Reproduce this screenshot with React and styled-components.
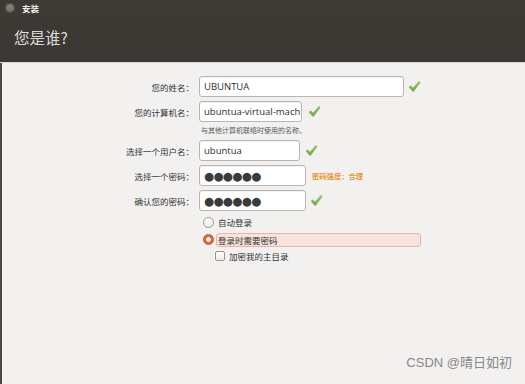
import React from "react";
import styled, { createGlobalStyle } from "styled-components";

const GlobalStyle = createGlobalStyle`
  html, body {
    margin: 0;
    padding: 0;
    width: 525px;
    height: 384px;
    overflow: hidden;
    background: #f2f1f0;
  }
  #root {
    height: 384px;
  }
`;

const Window = styled.div`
  display: flex;
  flex-direction: column;
  width: 525px;
  height: 384px;
  font-family: "Noto Sans CJK SC", "Noto Sans", sans-serif;
  position: relative;
`;

const TitleBar = styled.div`
  display: flex;
  align-items: center;
  gap: 7px;
  height: 16px;
  padding-left: 5px;
  background: #3d3a36;
`;

const CloseButton = styled.div`
  width: 10px;
  height: 10px;
  border-radius: 50%;
  background: radial-gradient(circle at 50% 40%, #8a8782, #5d5a56);
  box-shadow: inset 0 0 0 1px #4a4743;
`;

const TitleText = styled.span`
  color: #f0eeea;
  font-size: 8.5px;
  font-weight: bold;
`;

const Header = styled.div`
  height: 47px;
  display: flex;
  align-items: center;
  padding-left: 14px;
  padding-bottom: 5px;
  box-sizing: border-box;
  background: #3c3935;
  color: #dddad5;
  font-size: 15.5px;
  border-bottom: 1px solid #ddd9d3;
`;

const Body = styled.div`
  flex: 1;
  border-left: 2px solid #4a4744;
  background: #f2f1f0;
  padding-top: 13px;
  display: flex;
  flex-direction: column;
`;

const Row = styled.div`
  display: flex;
  align-items: center;
  height: 21px;
  margin-bottom: ${(p) => p.$gap || 4}px;
`;

const Label = styled.div`
  width: 197px;
  text-align: right;
  font-size: 8.5px;
  color: #333;
  padding-right: 5px;
  box-sizing: border-box;
  flex-shrink: 0;
  white-space: nowrap;
`;

const Field = styled.div`
  width: ${(p) => p.$w}px;
  height: 21px;
  box-sizing: border-box;
  border: 1px solid #b9b5b0;
  border-radius: 3px;
  background: #ffffff;
  box-shadow: inset 0 1px 1px rgba(0, 0, 0, 0.06);
  display: flex;
  align-items: center;
  padding-left: 4px;
  font-family: "Open Sans", "Noto Sans", sans-serif;
  font-size: 9.5px;
  color: #2e2e2e;
  overflow: hidden;
  white-space: nowrap;
  flex-shrink: 0;
`;

const Dots = styled.span`
  font-family: "DejaVu Sans", sans-serif;
  font-size: 11.5px;
  letter-spacing: -0.6px;
  color: #3a3a3a;
`;

const CheckWrap = styled.div`
  margin-left: ${(p) => p.$ml || 6}px;
  display: flex;
  align-items: center;
`;

const Hint = styled.div`
  margin-left: 199px;
  margin-top: 0;
  margin-bottom: 5px;
  font-size: 7px;
  color: #555;
  height: 10px;
  line-height: 10px;
`;

const Strength = styled.span`
  margin-left: 6px;
  font-size: 7.3px;
  font-weight: bold;
  color: #e99530;
`;

const Options = styled.div`
  display: flex;
  flex-direction: column;
  margin-left: 199px;
  margin-top: -2px;
`;

const OptionRow = styled.div`
  display: flex;
  align-items: center;
  height: ${(p) => p.$h || 16}px;
  margin-left: ${(p) => p.$indent || 0}px;
`;

const Radio = styled.div`
  width: 11px;
  height: 11px;
  border-radius: 50%;
  box-sizing: border-box;
  margin-left: 2px;
  flex-shrink: 0;
  border: 1px solid ${(p) => (p.$on ? "#c2502a" : "#9a9792")};
  background: ${(p) =>
    p.$on
      ? "radial-gradient(circle, #ffffff 0 2px, #e06a3c 2.5px)"
      : "linear-gradient(#ffffff, #ecebe9)"};
`;

const CheckBox = styled.div`
  width: 10px;
  height: 10px;
  box-sizing: border-box;
  border: 1px solid #9a9792;
  border-radius: 2px;
  background: linear-gradient(#ffffff, #ecebe9);
  flex-shrink: 0;
`;

const OptionText = styled.span`
  font-size: 8.5px;
  color: #333;
  margin-left: 4px;
`;

const Selected = styled.div`
  display: flex;
  align-items: center;
  width: 205px;
  height: 14px;
  box-sizing: border-box;
  margin-left: 2px;
  border: 1px solid #eab3a4;
  border-radius: 3px;
  background: #f7e2dd;
  font-size: 8.5px;
  color: #333;
  padding-left: 1px;
`;

const Watermark = styled.div`
  position: absolute;
  right: 13px;
  bottom: 13px;
  font-size: 13px;
  color: #8a8886;
  font-family: "Liberation Sans", "Noto Sans CJK SC", sans-serif;
`;

const Check = () => (
  <svg width="13" height="13" viewBox="0 0 12 12">
    <defs>
      <linearGradient id="chk" x1="0" y1="0" x2="0" y2="1">
        <stop offset="0" stopColor="#a3d070" />
        <stop offset="1" stopColor="#6fa23c" />
      </linearGradient>
    </defs>
    <path
      d="M1 6.6 L2.6 5.4 L4.6 7.6 L10 1.4 L11.2 2.4 L4.8 10.8 Z"
      fill="url(#chk)"
      stroke="#6f9c3d"
      strokeWidth="0.5"
      strokeLinejoin="round"
    />
  </svg>
);

export default function App() {
  return (
    <>
      <GlobalStyle />
      <Window>
        <TitleBar>
          <CloseButton />
          <TitleText>安装</TitleText>
        </TitleBar>
        <Header>您是谁?</Header>
        <Body>
          <Row>
            <Label>您的姓名：</Label>
            <Field $w={205}>UBUNTUA</Field>
            <CheckWrap $ml={4}>
              <Check />
            </CheckWrap>
          </Row>
          <Row $gap={3}>
            <Label>您的计算机名：</Label>
            <Field $w={103}>ubuntua-virtual-mach</Field>
            <CheckWrap>
              <Check />
            </CheckWrap>
          </Row>
          <Hint>与其他计算机联络时使用的名称。</Hint>
          <Row>
            <Label>选择一个用户名：</Label>
            <Field $w={101}>ubuntua</Field>
            <CheckWrap $ml={5}>
              <Check />
            </CheckWrap>
          </Row>
          <Row>
            <Label>选择一个密码：</Label>
            <Field $w={107}>
              <Dots>●●●●●●</Dots>
            </Field>
            <Strength>密码强度：合理</Strength>
          </Row>
          <Row>
            <Label>确认您的密码：</Label>
            <Field $w={107}>
              <Dots>●●●●●●</Dots>
            </Field>
            <CheckWrap $ml={4}>
              <Check />
            </CheckWrap>
          </Row>
          <Options>
            <OptionRow $h={18}>
              <Radio />
              <OptionText>自动登录</OptionText>
            </OptionRow>
            <OptionRow $h={17}>
              <Radio $on />
              <Selected>登录时需要密码</Selected>
            </OptionRow>
            <OptionRow $h={15} $indent={14}>
              <CheckBox />
              <OptionText>加密我的主目录</OptionText>
            </OptionRow>
          </Options>
        </Body>
        <Watermark>CSDN @晴日如初</Watermark>
      </Window>
    </>
  );
}
